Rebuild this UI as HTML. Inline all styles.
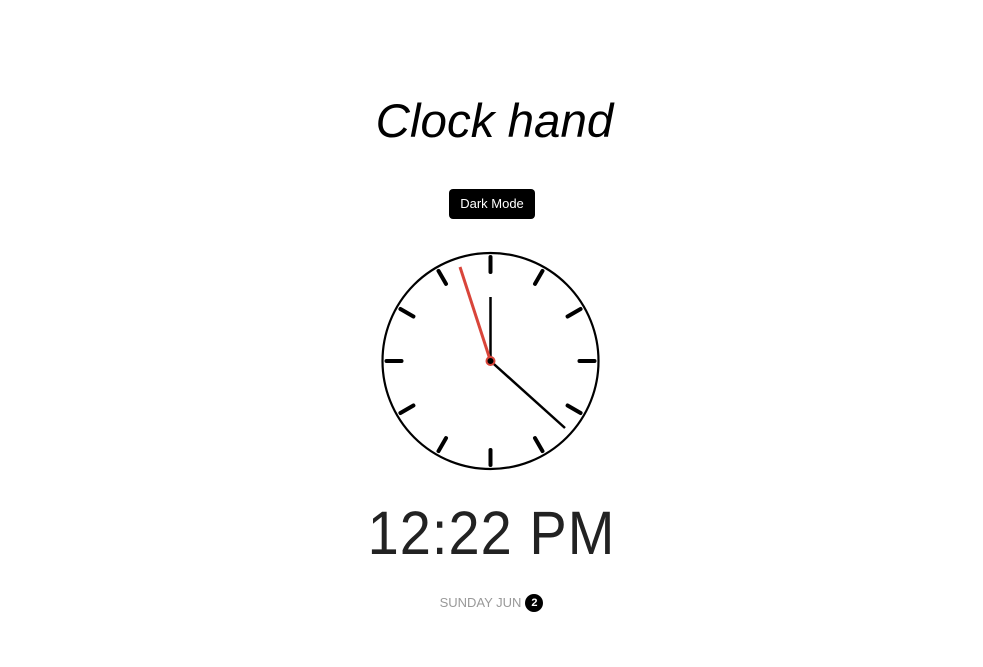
<!DOCTYPE html>
<html><head><meta charset="utf-8"><style>
html,body{margin:0;padding:0;background:#fff;width:983px;height:667px;overflow:hidden;font-family:"Liberation Sans",sans-serif;}
.t{position:absolute;left:0;width:983px;text-align:center;}
h1{position:absolute;margin:0;left:3px;width:983px;top:90px;text-align:center;font-style:italic;font-weight:normal;font-size:47.5px;line-height:64px;color:#000;}
.btn{position:absolute;left:449px;top:189px;width:86px;height:30px;background:#000;color:#fff;border-radius:4px;font-size:13px;line-height:30px;text-align:center;}
.time{top:498px;font-size:56px;line-height:70px;color:#222;letter-spacing:1px;transform:scaleY(1.1);transform-origin:50% 50%;}
.date{top:594px;font-size:13px;line-height:18px;color:#999;}
.b{display:inline-block;width:18px;height:18px;border-radius:50%;background:#000;color:#fff;font-size:11px;line-height:18px;font-weight:bold;text-align:center;vertical-align:top;margin-left:4px;}
</style></head><body>
<h1>Clock hand</h1>
<div class="btn">Dark Mode</div>
<svg style="position:absolute;left:0;top:0" width="983" height="667">
<circle cx="490.5" cy="361" r="108" fill="none" stroke="#000" stroke-width="2.2"/>
<g stroke="#000" stroke-width="4" stroke-linecap="round" transform="translate(490.5,361)">
<line x1="0" y1="-89" x2="0" y2="-104"/>
<line x1="0" y1="-89" x2="0" y2="-104" transform="rotate(30)"/>
<line x1="0" y1="-89" x2="0" y2="-104" transform="rotate(60)"/>
<line x1="0" y1="-89" x2="0" y2="-104" transform="rotate(90)"/>
<line x1="0" y1="-89" x2="0" y2="-104" transform="rotate(120)"/>
<line x1="0" y1="-89" x2="0" y2="-104" transform="rotate(150)"/>
<line x1="0" y1="-89" x2="0" y2="-104" transform="rotate(180)"/>
<line x1="0" y1="-89" x2="0" y2="-104" transform="rotate(210)"/>
<line x1="0" y1="-89" x2="0" y2="-104" transform="rotate(240)"/>
<line x1="0" y1="-89" x2="0" y2="-104" transform="rotate(270)"/>
<line x1="0" y1="-89" x2="0" y2="-104" transform="rotate(300)"/>
<line x1="0" y1="-89" x2="0" y2="-104" transform="rotate(330)"/>
</g>
<line x1="490.5" y1="361" x2="490.5" y2="297" stroke="#000" stroke-width="2.5"/>
<line x1="490.5" y1="361" x2="565" y2="428" stroke="#000" stroke-width="2.5"/>
<line x1="490.5" y1="361" x2="460" y2="267" stroke="#d9453a" stroke-width="3"/>
<circle cx="490.5" cy="361" r="4" fill="#000" stroke="#d9453a" stroke-width="2"/>
</svg>
<div class="t time">12:22 PM</div>
<div class="t date">SUNDAY JUN<span class="b">2</span></div>
</body></html>
